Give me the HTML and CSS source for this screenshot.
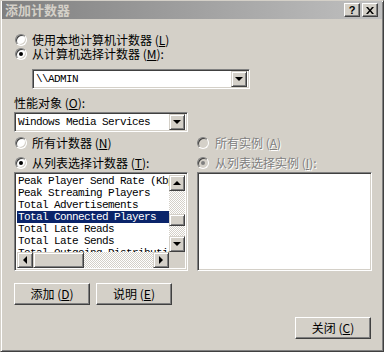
FILE: index.html
```html
<!DOCTYPE html>
<html lang="zh-CN">
<head>
    <meta charset="UTF-8">
    <title>添加计数器</title>
    <link rel="stylesheet" href="styles.css">
</head>
<body>
<div class="window">
    <!-- Caption -->
    <div class="titlebar">
        <span class="title">添加计数器</span>
        <span class="cap-btn help">?</span>
        <span class="cap-btn close">
            <svg width="8" height="7" viewBox="0 0 8 7"><path d="M0 0h2l2 2.5 2-2.5h2l-3 3.5 3 3.5h-2l-2-2.5-2 2.5h-2l3-3.5z" fill="#000"/></svg>
        </span>
    </div>

    <div class="content">
        <!-- Machine choice -->
        <div class="radio-row"><span class="radio"></span>使用本地计算机计数器 (<u>L</u>)</div>
        <div class="radio-row"><span class="radio checked"></span>从计算机选择计数器 (<u>M</u>):</div>
        <div class="combo machine">
            <span class="combo-text">\\ADMIN</span>
            <span class="drop-btn"><span class="arrow down"></span></span>
        </div>

        <div class="field-label">性能对象 (<u>O</u>):</div>
        <div class="combo object">
            <span class="combo-text">Windows Media Services</span>
            <span class="drop-btn"><span class="arrow down"></span></span>
        </div>

        <!-- Counters / instances -->
        <div class="columns">
            <div class="col">
                <div class="radio-row"><span class="radio"></span>所有计数器 (<u>N</u>)</div>
                <div class="radio-row spaced"><span class="radio checked"></span>从列表选择计数器 (<u>T</u>):</div>
                <div class="listbox">
                    <div class="items">
                        <div class="item">Peak Player Send Rate (Kbps)</div>
                        <div class="item">Peak Streaming Players</div>
                        <div class="item">Total Advertisements</div>
                        <div class="item selected">Total Connected Players</div>
                        <div class="item">Total Late Reads</div>
                        <div class="item">Total Late Sends</div>
                        <div class="item">Total Outgoing Distribution Connections</div>
                    </div>
                    <div class="vscroll">
                        <span class="sb-btn"><span class="arrow up"></span></span>
                        <span class="track"></span>
                        <span class="thumb"></span>
                        <span class="track short"></span>
                        <span class="sb-btn"><span class="arrow down"></span></span>
                    </div>
                    <div class="hscroll">
                        <span class="sb-btn"><span class="arrow left"></span></span>
                        <span class="thumb wide"></span>
                        <span class="track"></span>
                        <span class="sb-btn"><span class="arrow right"></span></span>
                    </div>
                    <div class="corner"></div>
                </div>
            </div>
            <div class="col">
                <div class="radio-row disabled"><span class="radio"></span>所有实例 (<u>A</u>)</div>
                <div class="radio-row spaced disabled"><span class="radio checked"></span>从列表选择实例 (<u>I</u>):</div>
                <div class="listbox empty"></div>
            </div>
        </div>

        <div class="btn-row">
            <button class="btn">添加 (<u>D</u>)</button>
            <button class="btn">说明 (<u>E</u>)</button>
        </div>
        <div class="close-row">
            <button class="btn">关闭 (<u>C</u>)</button>
        </div>
    </div>
</div>
</body>
</html>
```

FILE: styles.css
```css
body {
    margin: 0;
    background: #d4d0c8;
    font-family: "Noto Sans CJK SC", "Liberation Sans", sans-serif;
    font-size: 12px;
    color: #000;
}

.window {
    width: 384px;
    height: 352px;
    box-sizing: border-box;
    border: 1px solid;
    border-color: #d4d0c8 #404040 #404040 #d4d0c8;
    box-shadow: inset 1px 1px #fff, inset -1px -1px #808080;
    padding: 0 1px;
    background: #d4d0c8;
}

/* caption bar */
.titlebar {
    height: 18px;
    display: flex;
    align-items: center;
    background: linear-gradient(to right, #808080, #c0c0c0);
    padding-right: 4px;
}

.title {
    flex: 1;
    padding-left: 3px;
    color: #d4d0c8;
    font-weight: bold;
    font-size: 13px;
    line-height: 18px;
}

.cap-btn {
    width: 16px;
    height: 14px;
    box-sizing: border-box;
    display: flex;
    align-items: center;
    justify-content: center;
    background: #d4d0c8;
    border: 1px solid;
    border-color: #fff #404040 #404040 #fff;
    box-shadow: inset -1px -1px #808080;
    font-family: "Liberation Sans", sans-serif;
    font-weight: bold;
    font-size: 11px;
}

.cap-btn.close {
    margin-left: 2px;
}

/* dialog body */
.content {
    padding: 14px 11px 0 12px;
}

.radio-row {
    height: 14px;
    line-height: 14px;
    display: flex;
    align-items: center;
    white-space: nowrap;
}

.radio-row.spaced {
    margin-top: 6px;
}

.radio {
    width: 12px;
    height: 12px;
    box-sizing: border-box;
    margin: 0 5px 0 1px;
    border-radius: 50%;
    background: #fff;
    border: 1px solid;
    border-color: #808080 #fff #fff #808080;
    box-shadow: inset 1px 1px #404040, inset -1px -1px #d4d0c8;
    position: relative;
    flex: none;
}

.radio.checked::after {
    content: "";
    position: absolute;
    left: 3px;
    top: 3px;
    width: 4px;
    height: 4px;
    border-radius: 50%;
    background: #000;
}

.disabled {
    color: #808080;
    text-shadow: 1px 1px #fff;
}

.disabled .radio {
    background: #d4d0c8;
    margin-left: 0;
    margin-right: 6px;
}

.disabled .radio.checked::after {
    background: #808080;
}

.field-label {
    margin-top: 7px;
    height: 14px;
    line-height: 14px;
}

/* sunken fields */
.combo,
.listbox {
    box-sizing: border-box;
    border: 1px solid;
    border-color: #808080 #fff #fff #808080;
    box-shadow: inset 1px 1px #404040, inset -1px -1px #d4d0c8;
    background: #fff;
}

.combo {
    height: 20px;
    padding: 2px;
    display: flex;
    align-items: center;
}

.combo.machine {
    width: 218px;
    margin: 8px 0 0 18px;
}

.combo.object {
    width: 174px;
    margin-top: 2px;
}

.combo-text,
.item {
    font-family: "Liberation Mono", monospace;
    font-size: 11px;
    letter-spacing: -0.6px;
    white-space: nowrap;
}

.combo-text {
    flex: 1;
    padding-left: 1px;
    line-height: 16px;
}

.drop-btn,
.sb-btn {
    width: 16px;
    height: 16px;
    box-sizing: border-box;
    display: flex;
    align-items: center;
    justify-content: center;
    background: #d4d0c8;
    border: 1px solid;
    border-color: #d4d0c8 #404040 #404040 #d4d0c8;
    box-shadow: inset 1px 1px #fff, inset -1px -1px #808080;
    flex: none;
}

.arrow {
    width: 0;
    height: 0;
    border-style: solid;
    border-color: transparent;
}

.arrow.down {
    border-width: 4px 4px 0 4px;
    border-top-color: #000;
}

.arrow.up {
    border-width: 0 4px 4px 4px;
    border-bottom-color: #000;
}

.arrow.left {
    border-width: 4px 4px 4px 0;
    border-right-color: #000;
}

.arrow.right {
    border-width: 4px 0 4px 4px;
    border-left-color: #000;
}

/* columns with lists */
.columns {
    margin-top: 4px;
    display: grid;
    grid-template-columns: 174px 175px;
    column-gap: 9px;
}

.listbox {
    margin-top: 2px;
    height: 99px;
    padding: 2px;
    display: grid;
    grid-template-columns: 1fr 16px;
    grid-template-rows: 1fr 16px;
}

.items {
    overflow: hidden;
}

.item {
    height: 12px;
    line-height: 12px;
    padding-left: 1px;
}

.item.selected {
    background: #0a246a;
    color: #fff;
}

.vscroll,
.hscroll {
    display: flex;
}

.vscroll {
    flex-direction: column;
}

.track {
    flex: 1;
    background: repeating-conic-gradient(#fff 0 25%, #d4d0c8 0 50%) 0 0 / 2px 2px;
}

.track.short {
    flex: 0 0 10px;
}

.thumb {
    flex: 0 0 12px;
    box-sizing: border-box;
    background: #d4d0c8;
    border: 1px solid;
    border-color: #d4d0c8 #404040 #404040 #d4d0c8;
    box-shadow: inset 1px 1px #fff, inset -1px -1px #808080;
}

.thumb.wide {
    flex: 0 0 51px;
}

.corner {
    background: #d4d0c8;
}

/* push buttons */
.btn {
    width: 76px;
    height: 22px;
    box-sizing: border-box;
    padding: 0;
    background: #d4d0c8;
    border: 1px solid;
    border-color: #fff #404040 #404040 #fff;
    box-shadow: inset -1px -1px #808080;
    font-family: "Noto Sans CJK SC", "Liberation Sans", sans-serif;
    font-size: 12px;
    line-height: 18px;
    color: #000;
}

.btn-row {
    margin-top: 12px;
    display: flex;
    gap: 6px;
}

.close-row {
    margin-top: 12px;
    display: flex;
    justify-content: flex-end;
}
```
